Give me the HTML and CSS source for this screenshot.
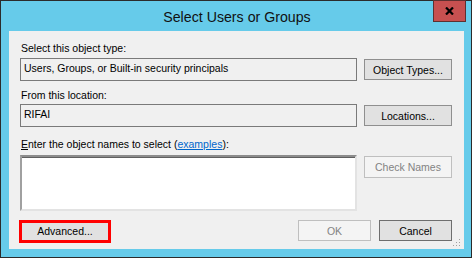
FILE: index.html
```html
<!DOCTYPE html>
<html lang="en">
<head>
  <meta charset="UTF-8">
  <title>Select Users or Groups</title>
  <link rel="stylesheet" href="styles.css">
</head>
<body>

  <div class="window">
    <!-- Barra de título -->
    <div class="titlebar">
      <span class="title">Select Users or Groups</span>
      <div class="close-btn">
        <svg width="9" height="8" viewBox="0 0 9 8">
          <path d="M1 0.5 L8 7.5 M8 0.5 L1 7.5" stroke="#000" stroke-width="2.2" fill="none"/>
        </svg>
      </div>
    </div>

    <!-- Área cliente -->
    <div class="client">
      <label class="field-label">Select this object type:</label>
      <div class="field-row">
        <div class="textbox readonly">Users, Groups, or Built-in security principals</div>
        <button class="btn">Object Types...</button>
      </div>

      <label class="field-label second">From this location:</label>
      <div class="field-row">
        <div class="textbox readonly">RIFAI</div>
        <button class="btn">Locations...</button>
      </div>

      <label class="field-label third"><span class="ak">E</span>nter the object names to select (<a href="#" class="link">examples</a>):</label>
      <div class="field-row top">
        <div class="names-box"></div>
        <button class="btn disabled check">Check Names</button>
      </div>

      <div class="bottom-row">
        <div class="highlight">
          <button class="btn advanced">Advanced...</button>
        </div>
        <div class="spacer"></div>
        <button class="btn disabled small">OK</button>
        <button class="btn small default">Cancel</button>
      </div>

      <!-- Agarre de redimensionado -->
      <svg class="grip" width="8" height="8" viewBox="0 0 8 8">
        <rect x="6" y="0" width="1" height="1" fill="#a0a0a0"/>
        <rect x="3" y="3" width="1" height="1" fill="#a0a0a0"/>
        <rect x="6" y="3" width="1" height="1" fill="#a0a0a0"/>
        <rect x="0" y="6" width="1" height="1" fill="#a0a0a0"/>
        <rect x="3" y="6" width="1" height="1" fill="#a0a0a0"/>
        <rect x="6" y="6" width="1" height="1" fill="#a0a0a0"/>
      </svg>
    </div>
  </div>

</body>
</html>
```

FILE: styles.css
```css
/* ====== RESET ====== */
html, body {
  margin: 0;
  padding: 0;
}

body {
  background: #ffffff;
  font-family: 'Liberation Sans', Arial, sans-serif;
}

/* ====== VENTANA ====== */
.window {
  position: relative;
  width: 470px;
  height: 256px;
  border: 1px solid #2b2b2b;
  background-color: #66cbea;
  display: flex;
  flex-direction: column;
}

.titlebar {
  height: 30px;
  display: flex;
  align-items: center;
  justify-content: center;
}

.title {
  font-size: 14.2px;
  color: #111;
  margin-left: 2px;
  margin-top: 1px;
}

.close-btn {
  position: absolute;
  top: -1px;
  right: 5px;
  width: 31px;
  height: 20px;
  background-color: #c75050;
  border: 1px solid #5e3030;
  display: flex;
  align-items: center;
  justify-content: center;
}

/* ====== ÁREA CLIENTE ====== */
.client {
  position: relative;
  margin: 0 7px 8px 8px;
  flex: 1;
  background-color: #f0f0f0;
  padding: 11px 12px 0 11px;
  display: flex;
  flex-direction: column;
  font-size: 10.5px;
  color: #000;
}

.field-label {
  display: block;
  height: 13px;
  line-height: 13px;
  margin: 0 0 3px 1px;
}
.field-label.second {
  margin-top: 8px;
  margin-bottom: 2px;
}
.field-label.third {
  margin-top: 11px;
  margin-bottom: 4px;
}

.ak {
  text-decoration: underline;
}
.link {
  color: #0066cc;
  text-decoration: underline;
}

.field-row {
  display: flex;
  align-items: center;
  gap: 7px;
}
.field-row.top {
  align-items: flex-start;
}

/* ====== CAJAS DE TEXTO ====== */
.textbox {
  flex: 1;
  height: 21px;
  line-height: 19px;
  padding: 0 3px;
  border: 1px solid #7a7a7a;
  white-space: nowrap;
}
.textbox.readonly {
  background-color: #f0f0f0;
}

.names-box {
  flex: 1;
  height: 52px;
  background-color: #ffffff;
  border: 2px solid;
  border-color: #8c8c8c #e3e3e3 #e3e3e3 #a0a0a0;
  box-shadow: inset 0 1px 0 #5f5f5f;
}

/* ====== BOTONES ====== */
.btn {
  width: 88px;
  height: 21px;
  padding: 0;
  font-family: 'Liberation Sans', Arial, sans-serif;
  font-size: 10.5px;
  color: #000;
  background-color: #e1e1e1;
  border: 1px solid #8f8f8f;
}
.btn.disabled {
  color: #838383;
  background-color: #f4f4f4;
  border-color: #bfbfbf;
}
.btn.check {
  margin-top: 1px;
  height: 22px;
}
.btn.small {
  width: 73px;
}
.btn.default {
  border-color: #6e6e6e;
}

/* ====== FILA INFERIOR ====== */
.bottom-row {
  display: flex;
  align-items: flex-start;
  gap: 8px;
  margin-top: 9px;
}
.spacer {
  flex: 1;
}

/* Recuadro rojo alrededor de "Advanced..." */
.highlight {
  margin-left: -1px;
  width: 86px;
  height: 17px;
  border: 3px solid #ff0000;
  background-color: #e1e1e1;
}
.btn.advanced {
  width: 86px;
  height: 17px;
  border: none;
  line-height: 17px;
}

.grip {
  position: absolute;
  right: 3px;
  bottom: 2px;
}
```
